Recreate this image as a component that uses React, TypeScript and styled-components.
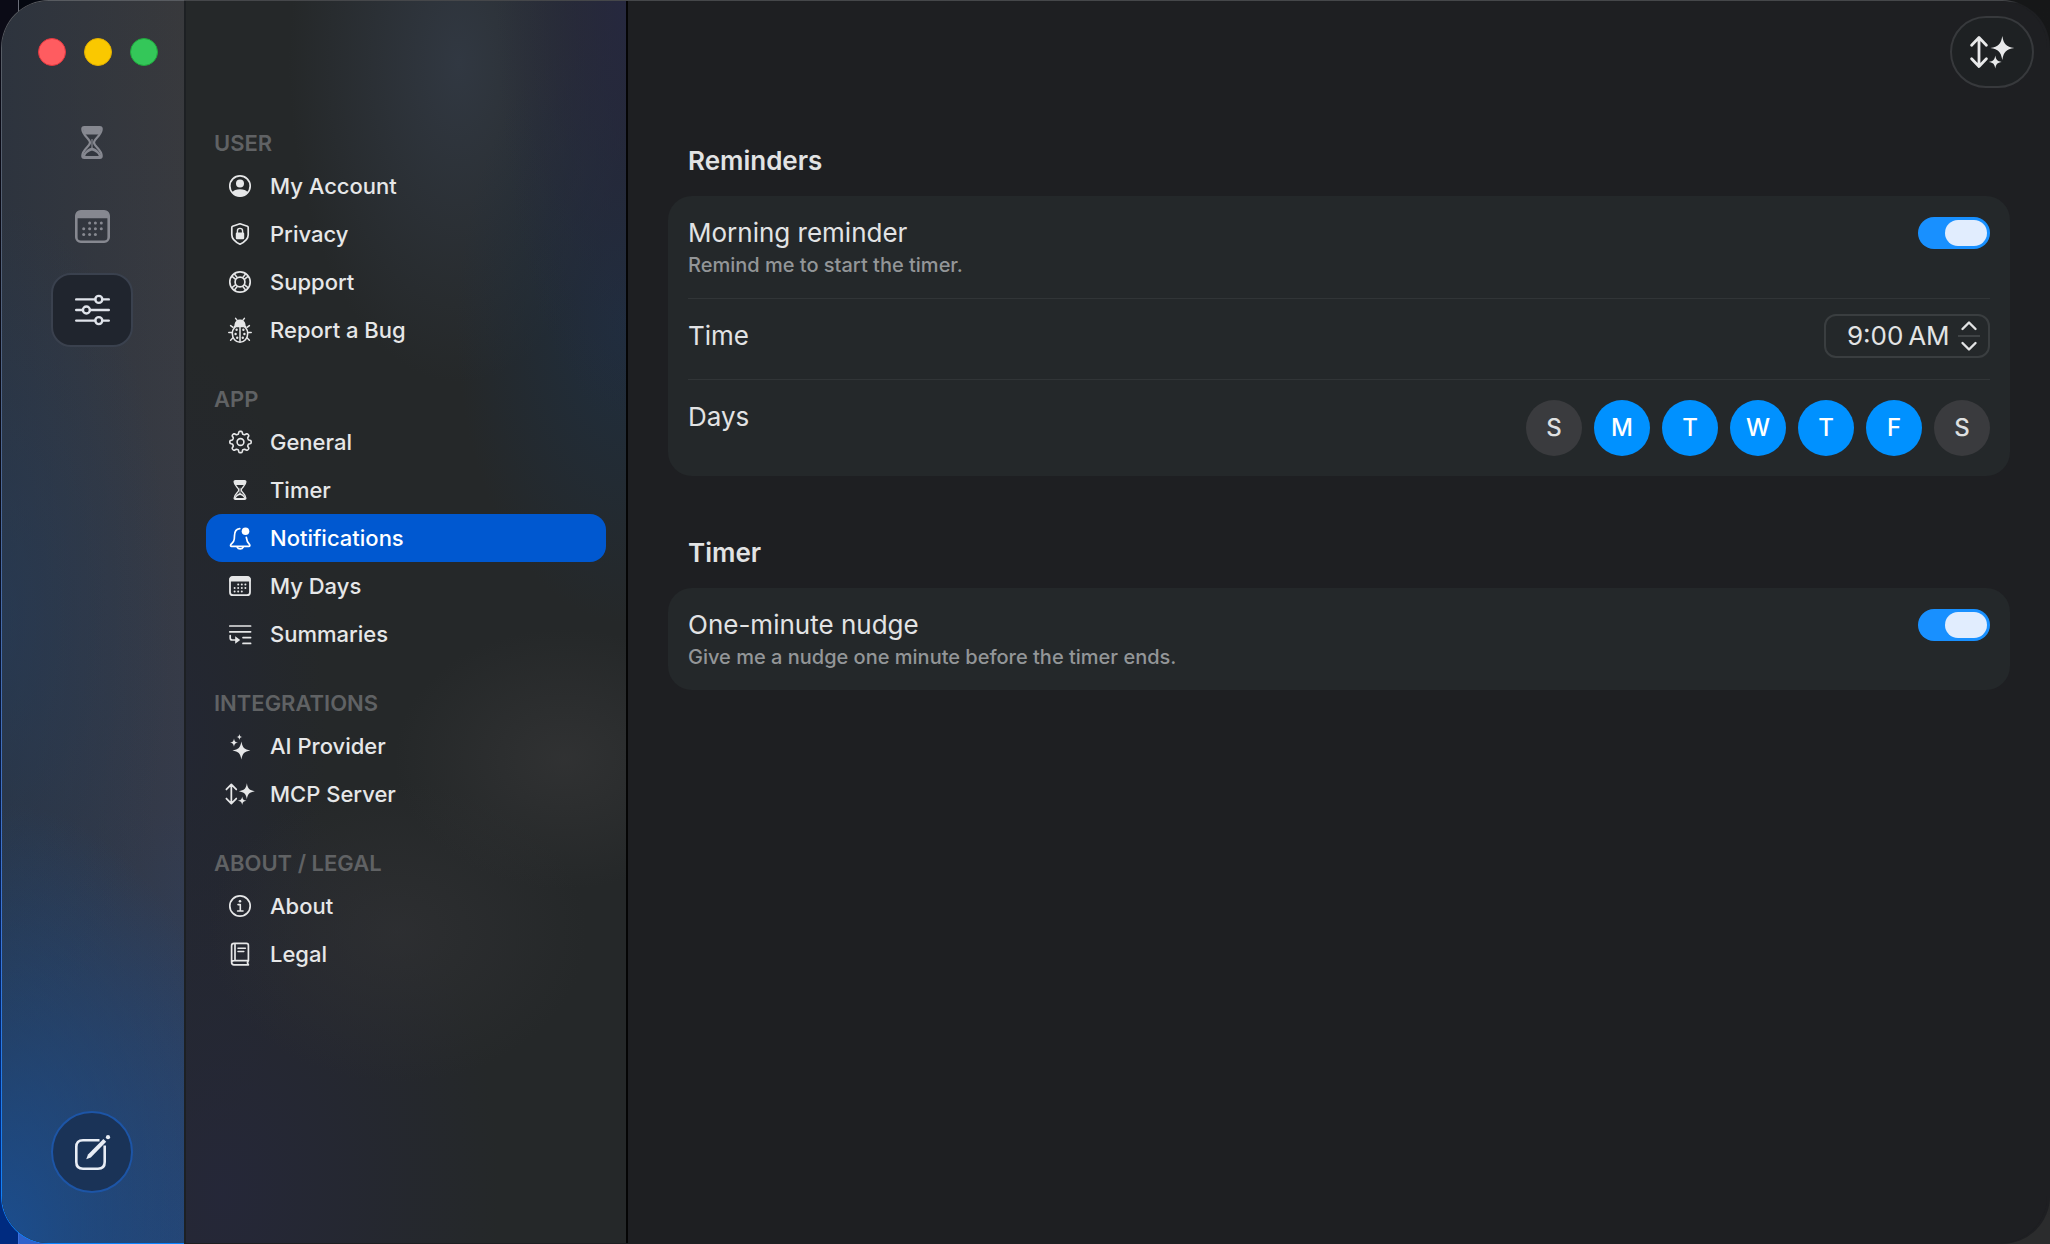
import React, { useState } from "react";
import styled, { createGlobalStyle, css } from "styled-components";

const GlobalStyle = createGlobalStyle`
  *, *::before, *::after { box-sizing: border-box; }
  body {
    margin: 0;
    background: #1a1b1c;
    font-family: Inter, "Liberation Sans", sans-serif;
    color: #e2e3e4;
    -webkit-font-smoothing: antialiased;
  }
  button, input { font: inherit; color: inherit; }
  button { cursor: pointer; }
`;

/* ---------- window chrome ---------- */

const Desktop = styled.div`
  min-height: 100vh;
  display: flex;
  background:
    linear-gradient(#6b6d78, #6b6d78 40px, #3d6fdc 60px) 18px 0 / 1px 100% no-repeat,
    linear-gradient(#0b0b16, #0b0b16 40%, #002b80 90%) 0 0 / 18px 100% no-repeat,
    linear-gradient(#04070f, #04070f 40%, #2f62cc 90%) 19px 0 / 180px 100% no-repeat,
    linear-gradient(#161718, #1a1b1c 85%, #2b2c2d 98%);
`;

const Frame = styled.div`
  flex: 1;
  display: flex;
  margin-left: 1px;
  padding: 1px 3px 1px 1px;
  border-radius: 48px;
  background:
    linear-gradient(#4d4f52, #1e1f22 3px) 183px 0 no-repeat,
    linear-gradient(#585b60, #50617c 25%, #3b76d6 75%, #0a84ff 100%);
`;

const Window = styled.div`
  flex: 1;
  min-width: 0;
  display: grid;
  grid-template-columns: 182px 444px minmax(0, 1fr);
  border-radius: 47px;
  overflow: hidden;
  background: #1e1f22;
`;

const Rail = styled.aside`
  display: flex;
  flex-direction: column;
  align-items: center;
  padding: 37px 2px 50px 0;
  background:
    radial-gradient(ellipse 260px 440px at 0 100%, rgba(24, 82, 156, 0.85), rgba(24, 82, 156, 0) 100%),
    radial-gradient(ellipse 170px 420px at 0 50%, rgba(34, 62, 98, 0.5), rgba(34, 62, 98, 0) 100%),
    linear-gradient(to right, rgba(44, 51, 62, 0.9), rgba(44, 51, 62, 0)),
    linear-gradient(#38393c 0%, #383b43 35%, #353b4b 65%, #28426a 100%);
`;

const TrafficLights = styled.div`
  display: flex;
  gap: 18px;
  padding-left: 12px;
`;

const Light = styled.button<{ $fill: string; $edge: string }>`
  width: 28px;
  height: 28px;
  padding: 0;
  border-radius: 50%;
  border: 1px solid ${(p) => p.$edge};
  background: ${(p) => p.$fill};
`;

const RailNav = styled.nav`
  display: flex;
  flex-direction: column;
  gap: 10px;
  margin-top: 39px;
`;

const RailButton = styled.button<{ $active?: boolean }>`
  display: grid;
  place-items: center;
  width: 82px;
  height: 74px;
  padding: 0;
  border-radius: 20px;
  border: 2px solid ${(p) => (p.$active ? "#3a414e" : "transparent")};
  background: ${(p) => (p.$active ? "#20252e" : "transparent")};
  color: ${(p) => (p.$active ? "#dfe3ea" : "#868890")};
`;

const ComposeButton = styled.button`
  display: grid;
  place-items: center;
  width: 82px;
  height: 82px;
  margin-top: auto;
  padding: 0;
  border-radius: 50%;
  border: 2px solid #1d55a6;
  background: #1a3357;
  color: #e8edf5;
`;

/* ---------- settings sidebar ---------- */

const Sidebar = styled.nav`
  display: flex;
  flex-direction: column;
  gap: 26px;
  padding: 123px 20px 40px;
  border-left: 2px solid #1d2023;
  border-right: 2px solid #050505;
  background:
    radial-gradient(ellipse 130px 420px at 100% 0, rgba(38, 40, 64, 0.95), rgba(38, 40, 64, 0) 100%),
    radial-gradient(ellipse 170px 300px at 100% 26%, rgba(30, 48, 68, 0.8), rgba(30, 48, 68, 0) 100%),
    radial-gradient(ellipse 170px 320px at 62% 5%, rgba(52, 60, 72, 0.8), rgba(52, 60, 72, 0) 100%),
    radial-gradient(ellipse 170px 130px at 86% 61%, rgba(51, 52, 53, 0.8), rgba(51, 52, 53, 0) 100%),
    radial-gradient(ellipse 190px 150px at 48% 75%, rgba(48, 49, 52, 0.7), rgba(48, 49, 52, 0) 100%),
    radial-gradient(ellipse 280px 400px at 8% 96%, rgba(37, 39, 60, 0.8), rgba(37, 39, 60, 0) 100%),
    radial-gradient(ellipse 140px 400px at 0 60%, rgba(34, 38, 54, 0.7), rgba(34, 38, 54, 0) 100%),
    #252829;
`;

const GroupTitle = styled.h2`
  margin: 0;
  padding: 0 8px;
  font-size: 22px;
  font-weight: 600;
  line-height: 38px;
  color: #606264;
`;

const List = styled.ul`
  margin: 0;
  padding: 0;
  list-style: none;
`;

const NavLink = styled.a<{ $active?: boolean }>`
  display: flex;
  align-items: center;
  gap: 16px;
  height: 48px;
  padding: 0 20px;
  border-radius: 16px;
  font-size: 22px;
  font-weight: 500;
  text-decoration: none;
  color: #e6e7e8;
  ${(p) =>
    p.$active &&
    css`
      background: #0058d0;
      color: #ffffff;
    `}
`;

/* ---------- main pane ---------- */

const Main = styled.main`
  display: flex;
  flex-direction: column;
  background: #1e1f22;
`;

const Toolbar = styled.header`
  display: flex;
  justify-content: flex-end;
  padding: 15px 13px 0;
`;

const PillButton = styled.button`
  display: grid;
  place-items: center;
  width: 84px;
  height: 72px;
  padding: 0;
  border-radius: 36px;
  border: 2px solid #37393c;
  background: #1e2123;
  color: #e8e9ea;
`;

const Content = styled.div`
  display: flex;
  flex-direction: column;
  gap: 42px;
  padding: 38px 37px 40px 40px;
`;

const SectionTitle = styled.h1`
  margin: 0;
  padding: 20px;
  font-size: 26px;
  font-weight: 600;
  line-height: 30px;
`;

const Card = styled.div`
  padding: 0 20px;
  border-radius: 24px;
  background: #24282a;
`;

const Row = styled.div<{ $compact?: boolean; $divided?: boolean }>`
  display: flex;
  justify-content: space-between;
  align-items: ${(p) => (p.$compact ? "center" : "flex-start")};
  padding: ${(p) => (p.$compact ? "15px 0 21px" : "20px 0")};
  border-bottom: ${(p) => (p.$divided ? "1px solid #313537" : "none")};
`;

const RowLabel = styled.label`
  font-size: 26px;
  line-height: 34px;
`;

const RowHint = styled.p`
  margin: 0;
  padding-top: 2px;
  font-size: 20px;
  font-weight: 500;
  line-height: 26px;
  color: #939698;
`;

const Toggle = styled.input`
  appearance: none;
  display: flex;
  width: 72px;
  height: 32px;
  margin: 1px 0;
  padding: 3px;
  border-radius: 16px;
  background: #46494c;
  cursor: pointer;
  &::before {
    content: "";
    width: 42px;
    height: 26px;
    border-radius: 13px;
    background: #e1edfe;
  }
  &:checked {
    justify-content: flex-end;
    background: #1890ff;
  }
`;

const TimeField = styled.div`
  display: flex;
  align-items: center;
  justify-content: space-between;
  width: 166px;
  height: 44px;
  padding: 0 8px 0 21px;
  border: 2px solid #3a3e40;
  border-radius: 12px;
`;

const TimeInput = styled.input`
  width: 106px;
  padding: 0;
  border: 0;
  outline: 0;
  background: transparent;
  font-size: 26px;
  line-height: 34px;
`;

const Stepper = styled.div`
  display: flex;
  flex-direction: column;
  width: 22px;
`;

const StepButton = styled.button`
  display: grid;
  place-items: center;
  height: 19px;
  padding: 0;
  border: 0;
  background: transparent;
  & + & {
    height: 21px;
    border-top: 2px solid #3f4345;
  }
`;

const Days = styled.div`
  display: flex;
  gap: 12px;
`;

const Day = styled.button<{ $on: boolean }>`
  width: 56px;
  height: 56px;
  padding: 0;
  border: 0;
  border-radius: 50%;
  font-size: 24px;
  font-weight: 500;
  line-height: 56px;
  background: ${(p) => (p.$on ? "#0091ff" : "#3a3b3e")};
  color: ${(p) => (p.$on ? "#ffffff" : "#dfe0e1")};
`;

/* ---------- icons ---------- */

const Svg = styled.svg`
  display: block;
  flex: none;
  overflow: visible;
  fill: none;
  stroke: currentColor;
  stroke-width: 2;
  stroke-linecap: round;
  stroke-linejoin: round;
  .solid { fill: currentColor; stroke: none; }
`;

const Glyph = ({ children }: { children: React.ReactNode }) => (
  <Svg width="28" height="28" viewBox="0 0 28 28" aria-hidden="true">
    {children}
  </Svg>
);

const star = (x: number, y: number, r: number) => {
  const k = r * 0.24;
  return (
    `M${x} ${y - r}C${x + k * 0.5} ${y - k * 1.3} ${x + k * 1.3} ${y - k * 0.5} ${x + r} ${y}` +
    `C${x + k * 1.3} ${y + k * 0.5} ${x + k * 0.5} ${y + k * 1.3} ${x} ${y + r}` +
    `C${x - k * 0.5} ${y + k * 1.3} ${x - k * 1.3} ${y + k * 0.5} ${x - r} ${y}` +
    `C${x - k * 1.3} ${y - k * 0.5} ${x - k * 0.5} ${y - k * 1.3} ${x} ${y - r}Z`
  );
};

const gearPath = (() => {
  const pts: string[] = [];
  for (let i = 0; i < 160; i++) {
    const a = (i / 160) * Math.PI * 2;
    const r = 9.4 + 1.3 * Math.tanh(2.2 * Math.cos(8 * a));
    pts.push(`${(14.5 + r * Math.sin(a)).toFixed(2)} ${(14 - r * Math.cos(a)).toFixed(2)}`);
  }
  return `M${pts.join("L")}Z`;
})();

const Hourglass = ({ width, height }: { width: number; height: number }) => (
  <Svg width={width} height={height} viewBox="0 0 22 33" aria-hidden="true">
    <path
      strokeWidth="2.2"
      d="M1.3 3Q1.3 1.2 3.3 1.2H18.7Q20.7 1.2 20.7 3C20.7 9.5 13 12.5 13 16.5C13 20.5 20.7 23.5 20.7 30Q20.7 31.8 18.7 31.8H3.3Q1.3 31.8 1.3 30C1.3 23.5 9 20.5 9 16.5C9 12.5 1.3 9.5 1.3 3Z"
    />
    <path className="solid" d="M1.5 1.5H20.5L18.8 8.4H3.2Z" />
    <path strokeWidth="1.2" d="M11 13.5V24" />
    <path
      className="solid"
      fillRule="evenodd"
      d="M11 21.5C14.5 22.5 18.5 25 20.4 30V31.5H1.6V30C3.5 25 7.5 22.5 11 21.5ZM11 24.6C7.5 25.8 5 27.4 4.2 29.9H17.8C17 27.4 14.5 25.8 11 24.6Z"
    />
  </Svg>
);

const Calendar = ({ width, height }: { width: number; height: number }) => (
  <Svg width={width} height={height} viewBox="0 0 35 33" aria-hidden="true">
    <rect x="1.3" y="1.3" width="32.4" height="30.4" rx="4.5" strokeWidth="2.6" />
    <path className="solid" d="M1 8.2V5Q1 1 5 1H30Q34 1 34 5V8.2Z" />
    {[
      [14.6, 12.9], [20.4, 12.9], [26.3, 12.9],
      [8.7, 18.8], [14.6, 18.8], [20.4, 18.8], [26.3, 18.8],
      [8.7, 24.6], [14.6, 24.6], [20.4, 24.6],
    ].map(([x, y]) => (
      <circle key={`${x}-${y}`} className="solid" cx={x} cy={y} r="1.5" />
    ))}
  </Svg>
);

const Sliders = () => (
  <Svg width="35" height="30" viewBox="0 0 35 30" aria-hidden="true">
    <path strokeWidth="2.4" d="M1.2 4.4H20.2M27.4 4.4H33.8M1.2 15H7.8M15 15H33.8M1.2 25.6H20.2M27.4 25.6H33.8" />
    <circle strokeWidth="2.4" cx="23.8" cy="4.4" r="3.5" />
    <circle strokeWidth="2.4" cx="11.4" cy="15" r="3.5" />
    <circle strokeWidth="2.4" cx="23.8" cy="25.6" r="3.5" />
  </Svg>
);

const Compose = () => (
  <Svg width="35" height="35" viewBox="0 0 35 35" aria-hidden="true">
    <path
      strokeWidth="2.6"
      strokeLinecap="butt"
      d="M24.5 5.3H8Q1.3 5.3 1.3 12V27Q1.3 33.7 8 33.7H23Q29.7 33.7 29.7 27V10.6"
    />
    <path className="solid" d="M11.2 24.2L13 19.6L28.4 4L31.2 6.8L15.8 22.4Z" />
    <circle className="solid" cx="33" cy="2.2" r="2.1" />
  </Svg>
);

const ArrowSparkles = ({ width, height, weight }: { width: number; height: number; weight: number }) => (
  <Svg width={width} height={height} viewBox="1 0 42 32" aria-hidden="true">
    <path strokeWidth={weight} d="M9 2V30M1.6 9.2L9 1.6L16.4 9.2M1.6 22.8L9 30.4L16.4 22.8" />
    <path className="solid" d={star(32.3, 12, 12)} />
    <path className="solid" d={star(25.3, 26, 6.4)} />
  </Svg>
);

const icons: Record<string, React.ReactNode> = {
  account: (
    <Glyph>
      <circle cx="14" cy="14" r="10.2" strokeWidth="1.7" />
      <circle className="solid" cx="14" cy="11.4" r="4" />
      <path className="solid" d="M6.2 20.5C7.5 18.2 10.5 17.2 14 17.2C17.5 17.2 20.5 18.2 21.8 20.5C20 23 17.2 24.4 14 24.4C10.8 24.4 8 23 6.2 20.5Z" />
    </Glyph>
  ),
  privacy: (
    <Glyph>
      <path strokeWidth="1.7" d="M14 3.8L21.4 6.2Q22.2 6.5 22.2 7.4V14.8C22.2 19.5 18.8 22 14 24.2C9.2 22 5.8 19.5 5.8 14.8V7.4Q5.8 6.5 6.6 6.2Z" />
      <rect className="solid" x="9.8" y="12.6" width="8.4" height="6.6" rx="1.2" />
      <path strokeWidth="1.4" d="M11.4 13V11A2.6 2.6 0 0 1 16.6 11V13" />
    </Glyph>
  ),
  support: (
    <Glyph>
      <circle cx="14" cy="14" r="10.2" strokeWidth="1.7" />
      <circle cx="14" cy="14" r="4.9" strokeWidth="1.7" />
      <path strokeWidth="1.5" strokeLinecap="butt" d="M6 8.4L10 11.6M8.4 6L11.6 10M22 8.4L18 11.6M19.6 6L16.4 10M6 19.6L10 16.4M8.4 22L11.6 18M22 19.6L18 16.4M19.6 22L16.4 18" />
    </Glyph>
  ),
  bug: (
    <Glyph>
      <path strokeWidth="1.5" d="M9.6 2.4L11.2 4.4M18.4 2.4L16.8 4.4" />
      <path className="solid" d="M8.4 10C8.4 5.8 10.8 3.6 14 3.6C17.2 3.6 19.6 5.8 19.6 10Z" />
      <ellipse cx="14" cy="17.6" rx="7.7" ry="8.6" strokeWidth="1.6" />
      <path strokeWidth="1.5" d="M14 11V25.5M7 11.4L4.6 9.6M6 16.4H2.8M7 21.8L4.6 24.2M21 11.4L23.4 9.6M22 16.4H25.2M21 21.8L23.4 24.2M8.5 10.6H19.5" />
      <circle className="solid" cx="10.6" cy="13.8" r="1.2" />
      <circle className="solid" cx="9.6" cy="18" r="1.2" />
      <circle className="solid" cx="11.2" cy="21.8" r="1.2" />
      <circle className="solid" cx="17.4" cy="13.8" r="1.2" />
      <circle className="solid" cx="18.4" cy="18" r="1.2" />
      <circle className="solid" cx="16.8" cy="21.8" r="1.2" />
    </Glyph>
  ),
  general: (
    <Glyph>
      <path strokeWidth="1.6" d={gearPath} />
      <circle cx="14.5" cy="14" r="3.4" strokeWidth="1.6" />
    </Glyph>
  ),
  timer: <Hourglass width={28} height={20} />,
  notifications: (
    <Glyph>
      <path
        strokeWidth="1.7"
        d="M13.8 4.6C10.2 5 8.5 7.8 8.5 11.6C8.5 17 7.4 18 4.8 20.6Q4 22.3 5.6 22.3H22.8Q24.4 22.3 23.6 20.6C21.4 18.4 20.6 17 20.3 13.4"
      />
      <path strokeWidth="1.7" d="M11.2 23.2A3.2 2.6 0 0 0 17.2 23.2" />
      <circle className="solid" cx="19.5" cy="7.3" r="3.8" />
    </Glyph>
  ),
  days: (
    <Glyph>
      <rect x="4" y="5" width="20" height="18.2" rx="3" strokeWidth="1.8" />
      <path className="solid" d="M3.4 9.4V7.4Q3.4 4.4 6.4 4.4H21.6Q24.6 4.4 24.6 7.4V9.4Z" />
      {[
        [12.2, 12.6], [15.8, 12.6], [19.4, 12.6],
        [8.6, 16], [12.2, 16], [15.8, 16], [19.4, 16],
        [8.6, 19.4], [12.2, 19.4], [15.8, 19.4],
      ].map(([x, y]) => (
        <circle key={`${x}-${y}`} className="solid" cx={x} cy={y} r="1" />
      ))}
    </Glyph>
  ),
  summaries: (
    <Glyph>
      <path strokeWidth="1.7" d="M3.8 6H24.6M3.8 11.8H24.6M17 17.6H24.6M17 23.4H24.6M4.2 15.6V18Q4.2 20 6.2 20H10" />
      <path className="solid" d="M9.2 16.2L14.2 20L9.2 23.8Z" />
    </Glyph>
  ),
  ai: (
    <Glyph>
      <path className="solid" d={star(15.4, 18.4, 9)} />
      <path className="solid" d={star(8, 10.6, 4.2)} />
      <path className="solid" d={star(13.4, 5, 3)} />
    </Glyph>
  ),
  mcp: <ArrowSparkles width={28} height={22} weight={2.6} />,
  about: (
    <Glyph>
      <circle cx="14" cy="14" r="10.2" strokeWidth="1.7" />
      <circle className="solid" cx="14" cy="9.2" r="1.3" />
      <path strokeWidth="1.6" d="M12 12.6H14.3V18.8M11.6 19H17" />
    </Glyph>
  ),
  legal: (
    <Glyph>
      <path strokeWidth="1.7" d="M22.4 20.6V5.4Q22.4 3.4 20.4 3.4H8Q5.6 3.4 5.6 5.8V22.2Q5.6 24.8 8 24.8H22.4Q20.6 22.8 22.4 20.6H8.2Q5.6 20.6 5.6 22.6M9 3.6V20.4" />
      <path strokeWidth="1.5" d="M12 8.2H19.4M12 11.6H17.8" />
    </Glyph>
  ),
};

const Chevron = ({ up }: { up?: boolean }) => (
  <Svg width="16" height="9" viewBox="0 0 16 9" aria-hidden="true">
    <path strokeWidth="2.4" d={up ? "M1.5 8L8 1.5L14.5 8" : "M1.5 1L8 7.5L14.5 1"} />
  </Svg>
);

/* ---------- data ---------- */

const groups = [
  {
    title: "USER",
    items: [
      ["account", "My Account"],
      ["privacy", "Privacy"],
      ["support", "Support"],
      ["bug", "Report a Bug"],
    ],
  },
  {
    title: "APP",
    items: [
      ["general", "General"],
      ["timer", "Timer"],
      ["notifications", "Notifications"],
      ["days", "My Days"],
      ["summaries", "Summaries"],
    ],
  },
  {
    title: "INTEGRATIONS",
    items: [
      ["ai", "AI Provider"],
      ["mcp", "MCP Server"],
    ],
  },
  {
    title: "ABOUT / LEGAL",
    items: [
      ["about", "About"],
      ["legal", "Legal"],
    ],
  },
];

const weekdays = [
  ["Sunday", "S"],
  ["Monday", "M"],
  ["Tuesday", "T"],
  ["Wednesday", "W"],
  ["Thursday", "T"],
  ["Friday", "F"],
  ["Saturday", "S"],
];

export default function App() {
  const [section, setSection] = useState("notifications");
  const [days, setDays] = useState([false, true, true, true, true, true, false]);
  const [hour, setHour] = useState(9);
  const step = (by: number) => setHour((h) => (h + by + 24) % 24);
  const time = `${hour % 12 || 12}:00\u202f${hour < 12 ? "AM" : "PM"}`;

  return (
    <>
      <GlobalStyle />
      <Desktop>
        <Frame>
          <Window>
            <Rail>
              <TrafficLights>
                <Light $fill="#ff5c60" $edge="#e2383f" aria-label="Close" />
                <Light $fill="#fac800" $edge="#e0ae00" aria-label="Minimize" />
                <Light $fill="#34c759" $edge="#1fa63c" aria-label="Zoom" />
              </TrafficLights>
              <RailNav aria-label="Views">
                <RailButton aria-label="Timer">
                  <Hourglass width={22} height={33} />
                </RailButton>
                <RailButton aria-label="Calendar">
                  <Calendar width={35} height={33} />
                </RailButton>
                <RailButton $active aria-label="Settings">
                  <Sliders />
                </RailButton>
              </RailNav>
              <ComposeButton aria-label="New entry">
                <Compose />
              </ComposeButton>
            </Rail>

            <Sidebar aria-label="Settings">
              {groups.map((group) => (
                <section key={group.title}>
                  <GroupTitle>{group.title}</GroupTitle>
                  <List>
                    {group.items.map(([id, label]) => (
                      <li key={id}>
                        <NavLink
                          href={`#${id}`}
                          $active={section === id}
                          aria-current={section === id ? "page" : undefined}
                          onClick={() => setSection(id)}
                        >
                          {icons[id]}
                          {label}
                        </NavLink>
                      </li>
                    ))}
                  </List>
                </section>
              ))}
            </Sidebar>

            <Main>
              <Toolbar>
                <PillButton aria-label="MCP server status">
                  <ArrowSparkles width={42} height={32} weight={2.8} />
                </PillButton>
              </Toolbar>
              <Content>
                <section>
                  <SectionTitle>Reminders</SectionTitle>
                  <Card>
                    <Row $divided>
                      <div>
                        <RowLabel htmlFor="morning">Morning reminder</RowLabel>
                        <RowHint>Remind me to start the timer.</RowHint>
                      </div>
                      <Toggle id="morning" type="checkbox" role="switch" defaultChecked />
                    </Row>
                    <Row $compact $divided>
                      <RowLabel htmlFor="time">Time</RowLabel>
                      <TimeField>
                        <TimeInput id="time" type="text" value={time} readOnly />
                        <Stepper>
                          <StepButton aria-label="Later" onClick={() => step(1)}>
                            <Chevron up />
                          </StepButton>
                          <StepButton aria-label="Earlier" onClick={() => step(-1)}>
                            <Chevron />
                          </StepButton>
                        </Stepper>
                      </TimeField>
                    </Row>
                    <Row>
                      <RowLabel as="span" id="days-label">Days</RowLabel>
                      <Days role="group" aria-labelledby="days-label">
                        {weekdays.map(([name, letter], i) => (
                          <Day
                            key={name}
                            $on={days[i]}
                            aria-label={name}
                            aria-pressed={days[i]}
                            onClick={() => setDays(days.map((d, j) => (j === i ? !d : d)))}
                          >
                            {letter}
                          </Day>
                        ))}
                      </Days>
                    </Row>
                  </Card>
                </section>
                <section>
                  <SectionTitle>Timer</SectionTitle>
                  <Card>
                    <Row>
                      <div>
                        <RowLabel htmlFor="nudge">One-minute nudge</RowLabel>
                        <RowHint>Give me a nudge one minute before the timer ends.</RowHint>
                      </div>
                      <Toggle id="nudge" type="checkbox" role="switch" defaultChecked />
                    </Row>
                  </Card>
                </section>
              </Content>
            </Main>
          </Window>
        </Frame>
      </Desktop>
    </>
  );
}
